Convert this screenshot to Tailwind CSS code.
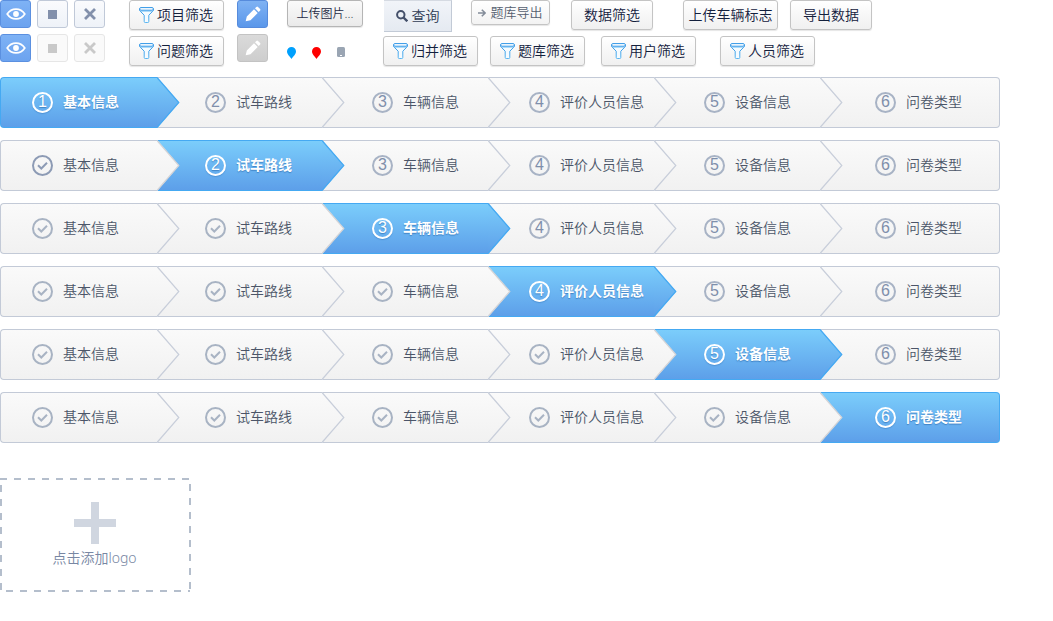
<!DOCTYPE html>
<html lang="zh-CN">
<head>
<meta charset="utf-8">
<title>问卷组件</title>
<script src="https://cdn.jsdelivr.net/npm/@tailwindcss/browser@4"></script>
</head>
<body class="bg-white font-['Noto_Sans','Noto_Sans_CJK_SC',sans-serif] text-sm font-[350] text-[#13203d]">
<svg class="absolute size-0" aria-hidden="true">
  <defs>
    <linearGradient id="g-on" x1="0" y1="0" x2="0" y2="1"><stop offset="0" stop-color="#7bcdfb"/><stop offset="1" stop-color="#5d9fe9"/></linearGradient>
    <linearGradient id="g-off" x1="0" y1="0" x2="0" y2="1"><stop offset="0" stop-color="#fafafa"/><stop offset="1" stop-color="#f1f1f1"/></linearGradient>
    <linearGradient id="g-funnel" x1="0" y1="0" x2="0" y2="1"><stop offset="0" stop-color="#2f95e6"/><stop offset="1" stop-color="#58b4f0"/></linearGradient>
  </defs>
  <symbol id="eye" viewBox="0 0 20 14"><path d="M1.2 7C5.5 .4 14.5 .4 18.8 7C14.500 13.600 5.500 13.600 1.200 7Z" fill="none" stroke="#fff" stroke-width="1.700"/><circle cx="10" cy="7" r="2.900" fill="#fff"/></symbol>
  <symbol id="cross" viewBox="0 0 12 12"><path d="M1 1L11 11M11 1L1 11" stroke="currentColor" stroke-width="2.800"/></symbol>
  <symbol id="funnel" viewBox="0 0 15 16"><path d="M.6 2V3.500L5.200 8.200V14.500Q5.200 15.500 6.200 15.500H8.800Q9.800 15.500 9.800 14.500V8.200L14.400 3.500V2Z" fill="#f5fbff" stroke="url(#g-funnel)"/><path d="M1.500 4.200H13.500" stroke="#8ccbf5"/><rect x=".6" y=".6" width="13.800" height="2.600" rx="1.300" fill="#fff" stroke="#2f95e6"/></symbol>
  <symbol id="pencil" viewBox="0 0 16 16"><path d="M.7 15.300L1.800 10.500L9 3.300L12.700 7L5.500 14.200ZM10 2.300L11.400 .9Q12.200 .2 13 .9L15.100 3Q15.800 3.800 15.100 4.600L13.700 6Z" fill="#fff"/></symbol>
</svg>

<main>
  <div class="flex h-[34px] items-start">
    <button aria-label="查看" class="flex h-7 w-[31px] items-center justify-center rounded-[3px] border border-[#5b90e0] bg-linear-to-b from-[#7eb2f5] to-[#6ca3ef]"><svg class="h-3.5 w-5"><use href="#eye"/></svg></button>
    <button aria-label="停止" class="ml-1.5 flex h-7 w-[31px] items-center justify-center rounded-[3px] border border-[#c0c9d8] bg-linear-to-b from-[#fafbfd] to-[#eef2f8]"><span class="size-[9px] bg-[#8290ab]"></span></button>
    <button aria-label="删除" class="ml-1.5 flex h-7 w-[31px] items-center justify-center rounded-[3px] border border-[#c0c9d8] bg-linear-to-b from-[#fafbfd] to-[#eef2f8] text-[#8290ab]"><svg class="size-3"><use href="#cross"/></svg></button>
    <button class="ml-6 flex h-[30px] w-[95px] items-center justify-center gap-[3px] rounded-[3px] border border-[#c4c4c4] bg-linear-to-b from-white to-[#f0f0f0] pr-px shadow-[0_1px_1px_#0000001a]"><svg class="h-4 w-[15px]"><use href="#funnel"/></svg>项目筛选</button>
    <button aria-label="编辑" class="ml-[13px] flex h-7 w-[31px] items-center justify-center rounded-[3px] border border-[#568bdc] bg-linear-to-b from-[#7fb2f3] to-[#5a97ea]"><svg class="size-4"><use href="#pencil"/></svg></button>
    <button class="ml-[19px] h-[27px] w-[76px] rounded-[3px] border border-[#b5b5b5] bg-linear-to-b from-[#fafafa] to-[#eaeaea] text-xs leading-6 text-[#1f2b45] shadow-[0_1px_1px_#0000001a]">上传图片...</button>
    <button class="ml-[21px] flex h-8 w-[68px] items-center justify-center gap-1 border-t border-r border-b border-[#c2cad6] border-t-[#d5dae2] bg-linear-to-b from-[#f1f4f9] to-[#e5eaf1] text-[#2f3b54]"><svg class="size-3" viewBox="0 0 12 12" fill="none" stroke="#44506a" stroke-width="2"><circle cx="4.800" cy="4.800" r="3.700"/><path d="M7.500 7.500L11.300 11.300" stroke-width="2.400"/></svg>查询</button>
    <button class="ml-[19px] flex h-[25px] w-[79px] items-center justify-center gap-1 rounded-[3px] border border-[#c4c4c4] bg-linear-to-b from-white to-[#f3f3f3] text-[13px] text-[#555f70] shadow-[0_1px_1px_#0000001a]"><svg class="size-2" viewBox="0 0 8 8"><path d="M0 4H7M3.800 .7L7.200 4L3.800 7.300" fill="none" stroke="#838c99" stroke-width="1.600"/></svg>题库导出</button>
    <button class="ml-[21px] h-[30px] w-[82px] rounded-[3px] border border-[#c4c4c4] bg-linear-to-b from-white to-[#f0f0f0] shadow-[0_1px_1px_#0000001a]">数据筛选</button>
    <button class="ml-[30px] h-[30px] w-[95px] rounded-[3px] border border-[#c4c4c4] bg-linear-to-b from-white to-[#f0f0f0] shadow-[0_1px_1px_#0000001a]">上传车辆标志</button>
    <button class="ml-3 h-[30px] w-[82px] rounded-[3px] border border-[#c4c4c4] bg-linear-to-b from-white to-[#f0f0f0] shadow-[0_1px_1px_#0000001a]">导出数据</button>
  </div>

  <div class="flex h-[43px] items-start">
    <button aria-label="查看" class="flex h-7 w-[31px] items-center justify-center rounded-[3px] border border-[#5b90e0] bg-linear-to-b from-[#7eb2f5] to-[#6ca3ef]"><svg class="h-3.5 w-5"><use href="#eye"/></svg></button>
    <button disabled aria-label="停止" class="ml-1.5 flex h-7 w-[31px] items-center justify-center rounded-[3px] border border-[#e6e6e6] bg-[#fafafa]"><span class="size-[9px] bg-[#c9c9c9]"></span></button>
    <button disabled aria-label="删除" class="ml-1.5 flex h-7 w-[31px] items-center justify-center rounded-[3px] border border-[#e6e6e6] bg-[#fafafa] text-[#c9c9c9]"><svg class="size-3"><use href="#cross"/></svg></button>
    <button class="mt-0.5 ml-6 flex h-[30px] w-[95px] items-center justify-center gap-[3px] rounded-[3px] border border-[#c4c4c4] bg-linear-to-b from-white to-[#f0f0f0] pr-px shadow-[0_1px_1px_#0000001a]"><svg class="h-4 w-[15px]"><use href="#funnel"/></svg>问题筛选</button>
    <button disabled aria-label="编辑" class="ml-[13px] flex h-7 w-[31px] items-center justify-center rounded-[3px] border border-[#c3c3c3] bg-linear-to-b from-[#dadada] to-[#cdcdcd]"><svg class="size-4"><use href="#pencil"/></svg></button>
    <div class="mt-[13px] ml-[19px] flex w-24 items-start gap-4">
      <svg class="h-3 w-[9px]" viewBox="0 0 9 12"><path d="M4.500 0A4.500 4.500 0 0 1 9 4.500C9 7.500 6 9.500 4.500 12C3 9.500 0 7.500 0 4.500A4.500 4.500 0 0 1 4.500 0Z" fill="#00a0fd"/></svg>
      <svg class="h-3 w-[9px]" viewBox="0 0 9 12"><path d="M4.500 0A4.500 4.500 0 0 1 9 4.500C9 7.500 6 9.500 4.500 12C3 9.500 0 7.500 0 4.500A4.500 4.500 0 0 1 4.500 0Z" fill="#fe0000"/></svg>
      <svg class="h-2.5 w-2" viewBox="0 0 8 10"><rect width="8" height="10" rx="1.500" fill="#9aa5b3"/><path d="M3 8.500H5" stroke="#fff"/></svg>
    </div>
    <button class="mt-0.5 flex h-[30px] w-[95px] items-center justify-center gap-[3px] rounded-[3px] border border-[#c4c4c4] bg-linear-to-b from-white to-[#f0f0f0] pr-px shadow-[0_1px_1px_#0000001a]"><svg class="h-4 w-[15px]"><use href="#funnel"/></svg>归并筛选</button>
    <button class="mt-0.5 ml-3 flex h-[30px] w-[95px] items-center justify-center gap-[3px] rounded-[3px] border border-[#c4c4c4] bg-linear-to-b from-white to-[#f0f0f0] pr-px shadow-[0_1px_1px_#0000001a]"><svg class="h-4 w-[15px]"><use href="#funnel"/></svg>题库筛选</button>
    <button class="mt-0.5 ml-4 flex h-[30px] w-[95px] items-center justify-center gap-[3px] rounded-[3px] border border-[#c4c4c4] bg-linear-to-b from-white to-[#f0f0f0] pr-px shadow-[0_1px_1px_#0000001a]"><svg class="h-4 w-[15px]"><use href="#funnel"/></svg>用户筛选</button>
    <button class="mt-0.5 ml-6 flex h-[30px] w-[95px] items-center justify-center gap-[3px] rounded-[3px] border border-[#c4c4c4] bg-linear-to-b from-white to-[#f0f0f0] pr-px shadow-[0_1px_1px_#0000001a]"><svg class="h-4 w-[15px]"><use href="#funnel"/></svg>人员筛选</button>
  </div>

  <section id="steps" aria-label="步骤" class="flex max-w-[1000px] flex-col gap-3"></section>

  <button class="relative mt-[35px] flex h-[114px] w-[191px] flex-col items-center pt-6 pr-0.5 text-[#7887a3]">
    <svg class="absolute inset-0 size-full" fill="none" stroke="#b4becc" stroke-width="2" stroke-dasharray="7 7" aria-hidden="true"><path d="M0 1H190M6 113H190M1 7V113M190 6V113"/></svg>
    <svg class="size-[42px]" viewBox="0 0 42 42" aria-hidden="true"><path d="M21 0V42M0 21H42" stroke="#d0d6e0" stroke-width="8"/></svg>
    <span class="mt-1 leading-5">点击添加logo</span>
  </button>
</main>

<script>
const labels = ['基本信息', '试车路线', '车辆信息', '评价人员信息', '设备信息', '问卷类型'];
const place = ['z-[6] pl-[31px] rounded-l-[4px] border-l', 'z-[5] pl-12', 'z-[4] pl-[50px]', 'z-[3] pl-[41px]', 'z-[2] pl-[50px]', 'z-[1] pl-[55px] rounded-r-[4px] border-r'];
const look = {
  on: 'border-[#45a9f2] bg-linear-to-b from-[#7bcdfb] to-[#5d9fe9] font-bold text-white text-shadow-[0_1px_1px_#2b6cb0aa]',
  off: 'border-[#c3cad7] bg-linear-to-b from-[#fafafa] to-[#f1f1f1] text-[#4b5568]'
};
function badge(i, active) {
  if (i < active) {
    const c = active === 1 ? '#8d9bb5' : '#a8b3c3';
    return `<svg class="size-[21px] shrink-0" viewBox="0 0 21 21" fill="none" stroke="${c}" stroke-width="2"><circle cx="10.5" cy="10.5" r="9.500"/><path d="M6 10.300L9.300 13.500L15 7.800"/></svg>`;
  }
  const tone = i === active ? 'border-white text-white shadow-[0_1px_1px_#2b6cb066]' : 'border-[#a8b3c5] text-[#7f8fab]';
  return `<span class="flex size-[21px] shrink-0 items-center justify-center rounded-full border-2 font-['Liberation_Sans',sans-serif] text-base font-normal leading-4 ${tone}">${i + 1}</span>`;
}
function arrow(i, active) {
  if (i === 5) return '';
  const on = i === active;
  const edge = on ? '#45a9f2' : i + 1 === active ? '#d3d3d6' : '#c8ceda';
  return `<svg class="absolute -top-px left-full h-[51px] w-[23px]" viewBox="0 0 23 51" aria-hidden="true"><path d="M0 0L22 25.500L0 51Z" fill="url(#${on ? 'g-on' : 'g-off'})"/><path d="M0 .5L21.800 25.500L0 50.500" fill="none" stroke="${edge}" stroke-width="1.200"/></svg>`;
}
document.getElementById('steps').innerHTML = labels.map((_, active) =>
  `<ol class="grid h-[51px] grid-cols-[157fr_165fr_166fr_166fr_166fr_180fr]">` + labels.map((text, i) =>
    `<li class="relative flex items-center gap-2.5 border-y pb-px whitespace-nowrap ${place[i]} ${i === active ? look.on : look.off}"${i === active ? ' aria-current="step"' : ''}>${badge(i, active)}<span>${text}</span>${arrow(i, active)}</li>`
  ).join('') + '</ol>').join('');
</script>
</body>
</html>
